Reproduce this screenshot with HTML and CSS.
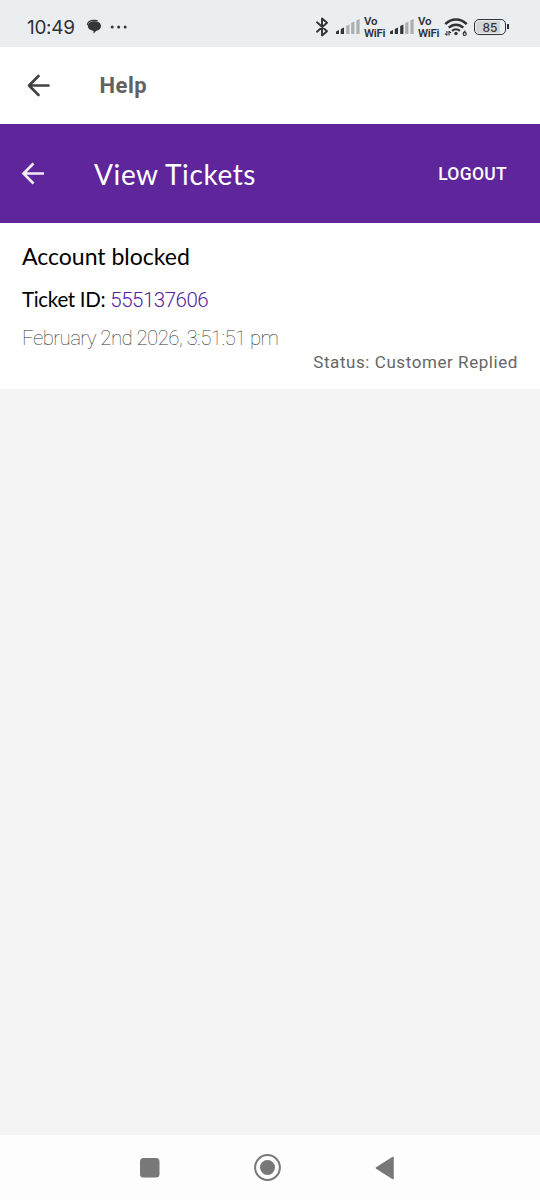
FILE: index.html
```
<!DOCTYPE html>
<html lang="en">
<head>
    <meta charset="UTF-8">
    <meta name="viewport" content="width=device-width, initial-scale=1.0">
    <title>View Tickets</title>
    <link rel="stylesheet" href="styles.css">
</head>
<body>
    <div class="status-bar">
        <span class="time">10:49</span>
        <svg class="chat-icon" width="16" height="16" viewBox="0 0 16 16">
            <path d="M.8 6C1 2.500 4 .8 8 .8c2 0 3.400.3 4.500 1.100H8C4.800 1.900 2.300 3.300 1.500 6.500z" fill="#333738"/>
            <path d="M8.600 2.300c3.700 0 6.400 1.900 6.400 4.800 0 2.600-2 4.500-5 4.800L7.500 14.700v-2.800C4.100 11.600 1.900 9.700 1.900 7.100c0-2.900 2.900-4.800 6.700-4.800z" fill="#333738"/>
        </svg>
        <svg class="dots-icon" width="18" height="4" viewBox="0 0 18 4" fill="#333738">
            <circle cx="2.200" cy="2" r="1.500"/><circle cx="8.700" cy="2" r="1.500"/><circle cx="15.100" cy="2" r="1.500"/>
        </svg>
        <div class="status-icons">
            <svg class="bt-icon" width="14" height="22" viewBox="0 0 14 22" fill="none" stroke="#303435" stroke-width="1.900" stroke-linejoin="round" stroke-linecap="round">
                <path d="M2 6.300L12 15.200L7 19.500V2.500L12 6.800L2 15.700"/>
            </svg>
            <svg class="signal" width="24" height="16" viewBox="0 0 24 16">
                <path d="M0 12.500l3-1.500v4H0zM4.800 10l3.200-1.500V15H4.800z" fill="#303435"/>
                <path d="M10.200 7l3.200-1.500V15h-3.200zM15.200 4l3.200-1.500V15h-3.200zM20.400 1.400L23.600 0v15h-3.200z" fill="#abafb0"/>
            </svg>
            <div class="vowifi"><span>Vo</span><span>WiFi</span></div>
            <svg class="signal" width="24" height="16" viewBox="0 0 24 16">
                <path d="M0 12.500l3-1.500v4H0zM4.800 10l3.200-1.500V15H4.800zM10.200 7l3.200-1.500V15h-3.200z" fill="#303435"/>
                <path d="M15.200 4l3.200-1.500V15h-3.200zM20.400 1.400L23.600 0v15h-3.200z" fill="#abafb0"/>
            </svg>
            <div class="vowifi"><span>Vo</span><span>WiFi</span></div>
            <svg class="wifi-icon" width="24" height="20" viewBox="0 0 24 20" fill="none" stroke="#303435">
                <path d="M1.300 7.200C7.500.9 16.500.9 22.700 7.200" stroke-width="2.500"/>
                <path d="M4.700 10.700C9 6.600 15 6.600 19.300 10.700" stroke-width="2.500"/>
                <path d="M8.100 13.900C10.300 11.900 13.700 11.900 15.900 13.900" stroke-width="2.300"/>
                <circle cx="12" cy="16.500" r="1.700" fill="#303435" stroke="none"/>
                <path d="M2.900 14v4.500M2.900 18.300L.9 16.600M5 18.500V14M5 14.200L7 16" stroke-width="1.100"/>
                <path d="M21.300 13.600L19.300 16.200" stroke-width="1.200"/>
                <circle cx="20.700" cy="16.900" r="1.500" stroke-width="1.200"/>
            </svg>
            <div class="battery"><span class="battery-level">85</span></div>
        </div>
    </div>

    <div class="help-bar">
        <svg class="back" width="24" height="24" viewBox="0 0 24 24" fill="none" stroke="#414141" stroke-width="2.600" stroke-linecap="round" stroke-linejoin="round">
            <path d="M21.500 11.500H2M11.500 2L2 11.500L11.500 21"/>
        </svg>
        <span class="help-title">Help</span>
    </div>

    <div class="ticket-bar">
        <svg class="back" width="24" height="24" viewBox="0 0 24 24" fill="none" stroke="#f3e9fb" stroke-width="2.700">
            <path d="M23 11.500H2.500M12.500 1.500L2.500 11.500L12.500 21.500"/>
        </svg>
        <span class="page-title">View Tickets</span>
        <a class="logout">LOGOUT</a>
    </div>

    <div class="ticket">
        <div class="ticket-subject">Account blocked</div>
        <div class="ticket-id">Ticket ID: <span class="ticket-number">555137606</span></div>
        <div class="ticket-date">February 2nd 2026, 3:51:51 pm</div>
        <div class="ticket-status">Status: Customer Replied</div>
    </div>

    <div class="nav-bar">
        <svg width="20" height="20" viewBox="0 0 20 20"><rect width="19.500" height="19.500" rx="3.500" fill="#787878"/></svg>
        <svg width="28" height="28" viewBox="0 0 28 28">
            <circle cx="13.500" cy="13.500" r="12.400" fill="none" stroke="#787878" stroke-width="2"/>
            <circle cx="13.500" cy="13.500" r="7.500" fill="#787878"/>
        </svg>
        <svg width="20" height="24" viewBox="0 0 20 24"><path d="M18 1.500v21L1.500 12z" fill="#787878" stroke="#787878" stroke-width="1.500" stroke-linejoin="round"/></svg>
    </div>
</body>
</html>
```
FILE: styles.css
```
* {
    box-sizing: border-box;
}
body {
    margin: 0;
    height: 1200px;
    display: flex;
    flex-direction: column;
    background-color: #f4f4f4;
    font-family: Lato, "Open Sans", sans-serif;
    white-space: nowrap;
}
.status-bar {
    height: 47px;
    padding: 7px 31px 0 27px;
    display: flex;
    align-items: center;
    background-color: #ebeef1;
    color: #303435;
}
.time {
    width: 59px;
    font-family: Inter, sans-serif;
    font-size: 19px;
    letter-spacing: -0.3px;
}
.chat-icon {
    margin-right: 8px;
}
.status-icons {
    margin-left: auto;
    display: flex;
    align-items: center;
}
.bt-icon {
    margin-right: 7px;
}
.signal {
    margin-right: 4px;
}
.vowifi {
    width: 22px;
    height: 22px;
    margin-right: 4px;
    display: flex;
    flex-direction: column;
    justify-content: space-between;
    font-family: Roboto, sans-serif;
    font-size: 11.500px;
    font-weight: 600;
    line-height: 10px;
    letter-spacing: -0.3px;
}
.wifi-icon {
    margin-right: 6px;
}
.battery {
    position: relative;
    width: 32px;
    height: 16px;
    padding: 1px;
    margin-right: 3px;
    border: 1.500px solid #303435;
    border-radius: 5px;
}
.battery::after {
    content: "";
    position: absolute;
    right: -4px;
    top: 4px;
    width: 2px;
    height: 5px;
    background-color: #303435;
}
.battery-level {
    display: block;
    height: 12px;
    border-radius: 3px;
    background: linear-gradient(to right, #d3d6d8 84%, transparent 84%);
    font-family: Inter, sans-serif;
    font-size: 12px;
    font-weight: 500;
    line-height: 13px;
    text-align: center;
}
.help-bar {
    height: 77px;
    padding-left: 27px;
    display: flex;
    align-items: center;
    background-color: #fff;
}
.help-title {
    margin-left: 48.500px;
    font-family: Roboto, sans-serif;
    font-size: 22px;
    font-weight: 700;
    letter-spacing: 0.5px;
    color: #616161;
}
.ticket-bar {
    height: 99px;
    padding: 0 33px 0 21px;
    display: flex;
    align-items: center;
    background-color: #5f259b;
    color: #fff;
}
.page-title {
    margin-left: 49px;
    font-size: 28px;
    letter-spacing: 0.6px;
}
.logout {
    margin-left: auto;
    font-family: Roboto, sans-serif;
    font-size: 17.500px;
    font-weight: 500;
    letter-spacing: 0.3px;
}
.ticket {
    height: 166px;
    padding: 19px 22px 0;
    background-color: #fff;
    color: #000;
}
.ticket-subject {
    font-size: 23px;
    line-height: 28px;
}
.ticket-id {
    height: 26px;
    margin-top: 16px;
    font-size: 20.500px;
    line-height: 26px;
    letter-spacing: -0.3px;
}
.ticket-number {
    font-family: Roboto, sans-serif;
    font-weight: 300;
    letter-spacing: -0.5px;
    color: #5320a0;
}
.ticket-date {
    margin-top: 13px;
    font-family: Roboto, sans-serif;
    font-size: 20.500px;
    font-weight: 100;
    line-height: 26px;
    letter-spacing: -0.6px;
    color: #333;
}
.ticket-status {
    font-family: Roboto, sans-serif;
    font-size: 17px;
    line-height: 22px;
    text-align: right;
    letter-spacing: 0.57px;
    color: #666;
}
.nav-bar {
    height: 65px;
    margin-top: auto;
    padding: 0 145px 0 140px;
    display: flex;
    align-items: center;
    justify-content: space-between;
    background-color: #fdfdfd;
}
```
